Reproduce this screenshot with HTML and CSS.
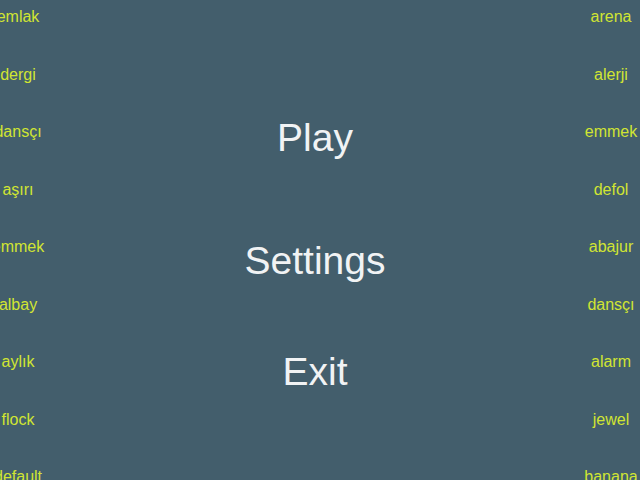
FILE: index.html
```html
<!DOCTYPE html>
<html lang="tr">
<head>
<meta charset="utf-8">
<title>Menu</title>
<link rel="stylesheet" href="styles.css">
</head>
<body>
<div class="screen">
  <div class="words words-left">
    <div class="word">emlak</div>
    <div class="word">dergi</div>
    <div class="word">dansçı</div>
    <div class="word">aşırı</div>
    <div class="word">emmek</div>
    <div class="word">albay</div>
    <div class="word">aylık</div>
    <div class="word">flock</div>
    <div class="word">default</div>
  </div>
  <div class="menu">
    <div class="item item-play">Play</div>
    <div class="item item-settings">Settings</div>
    <div class="item item-exit">Exit</div>
  </div>
  <div class="words words-right">
    <div class="word">arena</div>
    <div class="word">alerji</div>
    <div class="word">emmek</div>
    <div class="word">defol</div>
    <div class="word">abajur</div>
    <div class="word">dansçı</div>
    <div class="word">alarm</div>
    <div class="word">jewel</div>
    <div class="word">banana</div>
  </div>
</div>
</body>
</html>
```
FILE: styles.css
```css
html, body {
  margin: 0;
  padding: 0;
  background: #435e6c;
}
.screen {
  width: 640px;
  height: 480px;
  overflow: hidden;
  display: grid;
  grid-template-columns: 36px 1fr 58px;
  font-family: "Liberation Sans", Arial, sans-serif;
}
.words {
  display: flex;
  flex-direction: column;
  align-items: center;
  margin-top: -12px;
}
.word {
  height: 57.5px;
  line-height: 57.5px;
  font-size: 16px;
  color: #d1e532;
  white-space: nowrap;
  flex-shrink: 0;
}
.menu {
  display: flex;
  flex-direction: column;
  align-items: center;
  padding-left: 12px;
  padding-top: 115px;
}
.item {
  font-size: 39px;
  line-height: 46px;
  color: #f1f3f4;
  white-space: nowrap;
}
.item-settings {
  margin-top: 77px;
}
.item-exit {
  margin-top: 65px;
}
```
